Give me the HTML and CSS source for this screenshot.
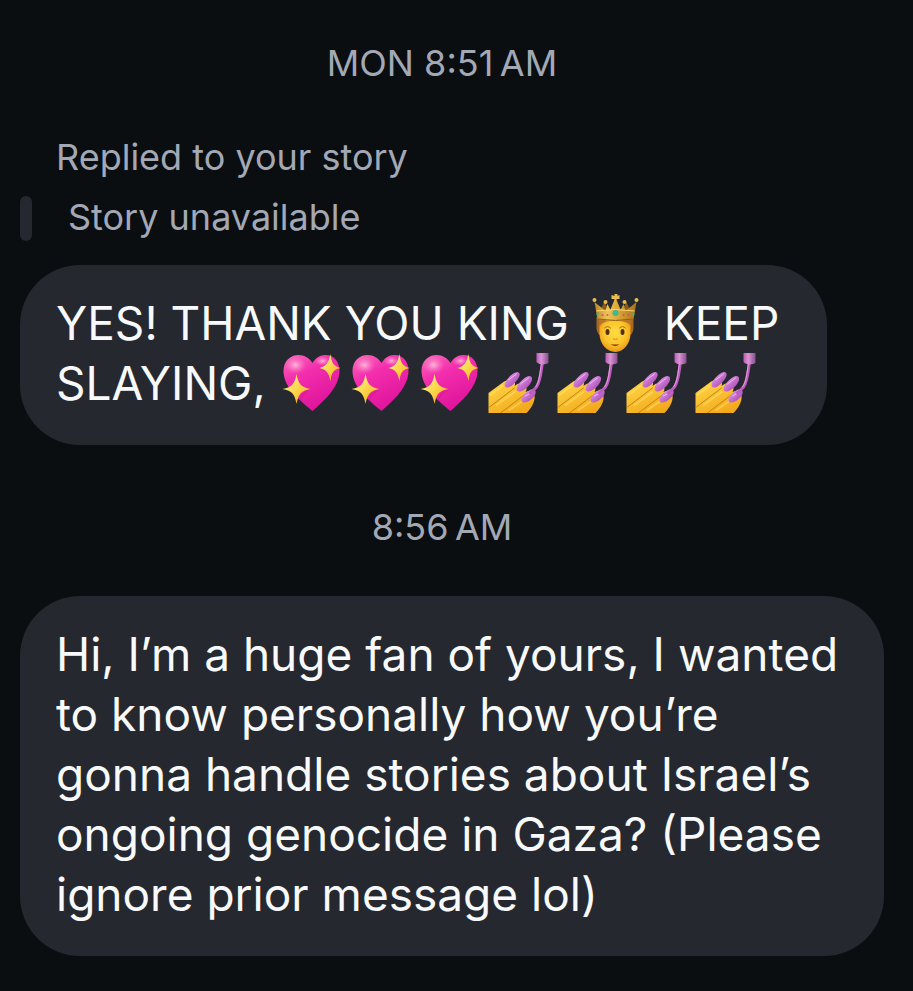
FILE: index.html
```html
<!DOCTYPE html>
<html lang="en">
<head>
  <meta charset="utf-8">
  <meta name="viewport" content="width=device-width, initial-scale=1">
  <title>Messages</title>
  <link rel="stylesheet" href="styles.css">
</head>
<body>

  <!-- emoji shapes, reused in the messages below -->
  <svg class="sprites" aria-hidden="true">
    <defs>
      <linearGradient id="pink" x1="0" y1="0" x2="0.5" y2="1">
        <stop offset="0" stop-color="#fb6cba"/>
        <stop offset="0.4" stop-color="#f32fae"/>
        <stop offset="1" stop-color="#df149b"/>
      </linearGradient>
      <radialGradient id="shine">
        <stop offset="0" stop-color="#ffc2df" stop-opacity="0.9"/>
        <stop offset="1" stop-color="#ff7cc4" stop-opacity="0"/>
      </radialGradient>
      <linearGradient id="star" x1="0" y1="0" x2="1" y2="1">
        <stop offset="0.2" stop-color="#ffee7a"/>
        <stop offset="0.8" stop-color="#f7bd23"/>
      </linearGradient>
      <linearGradient id="skin" x1="0" y1="0" x2="0.6" y2="1">
        <stop offset="0" stop-color="#ffda4b"/>
        <stop offset="1" stop-color="#f3a91c"/>
      </linearGradient>
      <radialGradient id="face" cx="0.5" cy="0.4" r="0.6">
        <stop offset="0" stop-color="#ffdd45"/>
        <stop offset="0.6" stop-color="#fcc52b"/>
        <stop offset="1" stop-color="#e89814"/>
      </radialGradient>
      <linearGradient id="gold" x1="0" y1="0" x2="1" y2="0">
        <stop offset="0" stop-color="#b9831f"/>
        <stop offset="0.3" stop-color="#edc453"/>
        <stop offset="0.6" stop-color="#d9a233"/>
        <stop offset="1" stop-color="#a97318"/>
      </linearGradient>
      <linearGradient id="nail" x1="0" y1="0" x2="1" y2="1">
        <stop offset="0.2" stop-color="#df95e4"/>
        <stop offset="0.8" stop-color="#a94bb6"/>
      </linearGradient>
      <linearGradient id="cap" x1="0" y1="0" x2="1" y2="0">
        <stop offset="0" stop-color="#b85db8"/>
        <stop offset="0.4" stop-color="#dd93d6"/>
        <stop offset="1" stop-color="#85508b"/>
      </linearGradient>
    </defs>

    <symbol id="heart" viewBox="0 0 60 60">
      <path fill="url(#pink)" d="M31 58C22 50 2 36 2 18C2 8 9 2 17 2C23 2 28 5 31 10C34 5 38 2 44 2C53 2 58 9 58 18C58 35 40 50 31 58Z"/>
      <ellipse fill="url(#shine)" cx="14" cy="12" rx="11" ry="9"/>
      <ellipse fill="url(#shine)" cx="41" cy="8" rx="8" ry="5"/>
      <path fill="#b80d83" opacity="0.35" d="M17 51C19 43 21 39 30 36C22 41 20 45 18 50Z"/>
      <path fill="url(#star)" d="M15 21C17 31 19 34 29 36C19 38 17 41 15 51C13 41 11 38 1 36C11 34 13 31 15 21Z"/>
      <path fill="url(#star)" d="M49 1C50 10 52 13 59 15C52 17 50 19 49 28C47 19 45 17 38 15C45 13 47 10 49 1Z"/>
    </symbol>

    <symbol id="polish" viewBox="0 0 60 60">
      <path fill="url(#skin)" d="M0 40L15 29C19 26 29 27 26 33L29 31C36 29 40 34 37 39C43 36 47 40 46 46C45 52 41 57 38 60H0Z"/>
      <path fill="none" stroke="#c58512" stroke-width="1" stroke-linecap="round" d="M26 35L1 54M37 41L12 60"/>
      <path fill="none" stroke="#ffe46a" stroke-width="2" stroke-linecap="round" opacity="0.5" d="M14 33L2 42M26 39L8 52M34 48L21 57"/>
      <path fill="url(#nail)" d="M16 32C16 27 25 19 29 19C33 20 31 25 27 29C23 34 17 37 16 32Z"/>
      <path fill="url(#nail)" d="M28 36C28 31 37 23 41 23C46 24 43 30 39 34C35 38 29 41 28 36Z"/>
      <path fill="url(#nail)" d="M33 47C33 42 41 36 45 36C49 38 47 43 43 46C39 50 33 51 33 47Z"/>
      <path fill="none" stroke="#f3b5f0" stroke-width="1" stroke-linecap="round" d="M20 27L28 21M32 31L40 25M37 43L44 39"/>
      <path fill="none" stroke="#bd5dbd" stroke-width="3" stroke-linecap="round" d="M54 9C52 22 52 28 48 34L42 40"/>
      <path fill="none" stroke="#ea9ce0" stroke-width="1" d="M53 10C51 22 51 28 47 34"/>
      <path fill="url(#cap)" d="M48 0H60V10C57 12 50 12 48 9Z"/>
    </symbol>

    <symbol id="king" viewBox="0 0 60 60">
      <path fill="#a96820" d="M12 24H49V34C49 38 48 40 46 42H15C13 40 12 38 12 34Z"/>
      <path fill="url(#face)" d="M15 31C16 27 20 27 23 27H39C43 27 46 28 46 32V41C46 50 39 59 31 59C22 59 15 50 15 41Z"/>
      <path fill="#b4752a" d="M14 26H47L46 33C43 28 37 28 30 28C23 28 18 28 15 34Z"/>
      <path fill="none" stroke="#a96a18" stroke-width="1" stroke-linecap="round" d="M20 35Q23 32 26 35M35 35Q38 32 41 35"/>
      <ellipse fill="#54300f" cx="23" cy="39" rx="2" ry="3"/>
      <ellipse fill="#54300f" cx="38" cy="39" rx="2" ry="3"/>
      <path fill="none" stroke="#d68a16" stroke-width="1" stroke-linecap="round" d="M29 46Q31 47 33 46"/>
      <path fill="#7a3214" d="M26 51Q31 52 35 51Q31 55 26 51Z"/>
      <path fill="#8a5b14" d="M14 20L20 9L25 18L31 5L37 18L42 9L47 20Z"/>
      <path fill="url(#gold)" d="M13 26L10 9L21 18L23 11L26 17L31 4L36 17L39 11L41 18L52 9L49 26Q31 30 13 26Z"/>
      <path fill="none" stroke="#f5d877" stroke-width="1" d="M12 18Q31 15 50 18"/>
      <path fill="none" stroke="#93620f" stroke-width="1" d="M13 26Q31 29 49 26"/>
      <g fill="#e7bd50">
        <circle cx="10" cy="7" r="2"/>
        <circle cx="21" cy="9" r="2"/>
        <path d="M27 2L30 3V1H33V3L35 2V6L32 6L31 9L30 6L27 6Z"/>
        <circle cx="40" cy="9" r="2"/>
        <circle cx="52" cy="7" r="2"/>
      </g>
      <g fill="#39ba94">
        <circle cx="31" cy="20" r="3"/>
        <ellipse cx="13" cy="21" rx="1" ry="2"/>
        <ellipse cx="49" cy="21" rx="1" ry="2"/>
      </g>
      <g fill="#d64c80">
        <circle cx="18" cy="22" r="1"/>
        <circle cx="23" cy="22" r="1"/>
        <circle cx="39" cy="22" r="1"/>
        <circle cx="44" cy="22" r="1"/>
      </g>
    </symbol>
  </svg>

  <main class="chat">
    <time class="timestamp">MON 8:51&#8201;AM</time>

    <section class="message">
      <p class="reply-label">Replied to your story</p>
      <div class="story">
        <span class="story-bar"></span>
        <p>Story unavailable</p>
      </div>
      <p class="bubble reply">
        YES! THANK YOU KING
        <svg class="emoji" role="img" aria-label="prince"><use href="#king"/></svg>
        KEEP<br>SLAYING,
        <svg class="emoji" role="img" aria-label="sparkling heart"><use href="#heart"/></svg><svg class="emoji" role="img" aria-label="sparkling heart"><use href="#heart"/></svg><svg class="emoji" role="img" aria-label="sparkling heart"><use href="#heart"/></svg><svg class="emoji" role="img" aria-label="nail polish"><use href="#polish"/></svg><svg class="emoji" role="img" aria-label="nail polish"><use href="#polish"/></svg><svg class="emoji" role="img" aria-label="nail polish"><use href="#polish"/></svg><svg class="emoji" role="img" aria-label="nail polish"><use href="#polish"/></svg>
      </p>
    </section>

    <time class="timestamp">8:56&#8201;AM</time>

    <section class="message">
      <p class="bubble">Hi, I’m a huge fan of yours, I wanted to know personally how you’re gonna handle stories about Israel’s ongoing genocide in Gaza? (Please ignore prior message lol)</p>
    </section>
  </main>

</body>
</html>
```

FILE: styles.css
```css
* {
  box-sizing: border-box;
}

body {
  margin: 0;
  background: #0a0e11;
  color: #f7f9fb;
  font-family: Inter, "Liberation Sans", sans-serif;
}

p {
  margin: 0;
}

.sprites {
  position: absolute;
  width: 0;
  height: 0;
}

.chat {
  padding: 41px 29px 36px 0;
}

.timestamp,
.reply-label,
.story {
  color: #a3a8b5;
  font-size: 36px;
  line-height: 44px;
}

.timestamp {
  display: block;
  text-align: center;
}

.message {
  margin: 47px 0 60px 20px;
}

.message:last-child {
  margin-bottom: 0;
}

.reply-label {
  padding: 3px 0 0 36px;
}

.story {
  display: flex;
  gap: 36px;
  margin: 17px 0 24px;
  line-height: 42px;
}

.story-bar {
  width: 12px;
  height: 45px;
  border-radius: 6px;
  background: #25282f;
}

.bubble {
  width: fit-content;
  padding: 28px 36px 32px;
  border-radius: 60px;
  background: #25282f;
  font-size: 46px;
  line-height: 60px;
}

.reply {
  padding-right: 48px;
}

.emoji {
  width: 61px;
  height: 60px;
  margin: 0 6px 0 2px;
  vertical-align: top;
}
```
